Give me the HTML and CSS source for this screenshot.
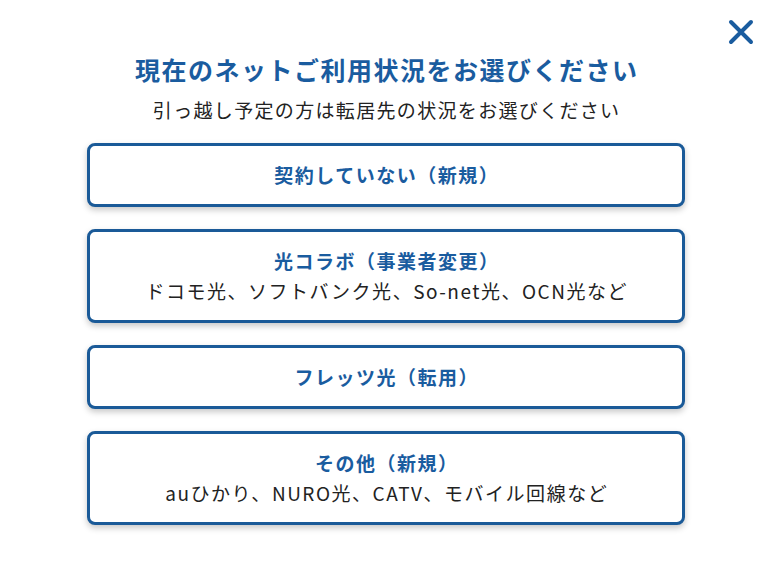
FILE: index.html
```html
<!DOCTYPE html>
<html lang="ja">
<head>
<meta charset="utf-8">
<link rel="stylesheet" href="styles.css">
</head>
<body>
<div class="modal">
  <button class="close" aria-label="閉じる">
    <svg width="26" height="26" viewBox="0 0 26 26"><path d="M3 3 L23 23 M23 3 L3 23" stroke="#1a5c9f" stroke-width="4" stroke-linecap="round" fill="none"/></svg>
  </button>
  <h1 class="title">現在のネットご利用状況をお選びください</h1>
  <p class="subtitle">引っ越し予定の方は転居先の状況をお選びください</p>
  <div class="options">
    <div class="option"><span class="main">契約していない（新規）</span></div>
    <div class="option"><span class="main">光コラボ（事業者変更）</span><span class="sub">ドコモ光、ソフトバンク光、So-net光、OCN光など</span></div>
    <div class="option"><span class="main">フレッツ光（転用）</span></div>
    <div class="option"><span class="main">その他（新規）</span><span class="sub">auひかり、NURO光、CATV、モバイル回線など</span></div>
  </div>
</div>
</body>
</html>
```
FILE: styles.css
```css
html, body {
  margin: 0;
  padding: 0;
  background: #fff;
}
.modal {
  position: relative;
  width: 772px;
  height: 583px;
  box-sizing: border-box;
  padding-top: 53px;
  font-family: "Noto Sans CJK JP", "Noto Sans", sans-serif;
}
.close {
  position: absolute;
  top: 19px;
  left: 728px;
  width: 26px;
  height: 26px;
  padding: 0;
  border: 0;
  background: none;
  display: block;
}
.close svg { display: block; }
.title {
  margin: 0;
  text-align: center;
  font-size: 25px;
  line-height: 32px;
  font-weight: 700;
  color: #1a5c9f;
  letter-spacing: 0.06em;
  padding-left: 0.06em;
}
.subtitle {
  margin: 12px 0 0;
  text-align: center;
  font-size: 19px;
  line-height: 26px;
  color: #222;
  letter-spacing: 0.07em;
  padding-left: 0.07em;
}
.options {
  margin: 20px auto 0;
  width: 598px;
  display: flex;
  flex-direction: column;
  gap: 22px;
}
.option {
  border: 3px solid #1a5a98;
  border-radius: 8px;
  padding: 14px 0 14px;
  display: flex;
  flex-direction: column;
  align-items: center;
  box-shadow: 0 3px 6px rgba(0, 0, 0, 0.22);
  background: #fff;
}
.main {
  font-size: 19px;
  line-height: 30px;
  font-weight: 700;
  color: #1a5c9f;
  letter-spacing: 0.08em;
  padding-left: 0.08em;
}
.sub {
  font-size: 19px;
  line-height: 30px;
  color: #222;
  letter-spacing: 0.08em;
  padding-left: 0.08em;
}
```
